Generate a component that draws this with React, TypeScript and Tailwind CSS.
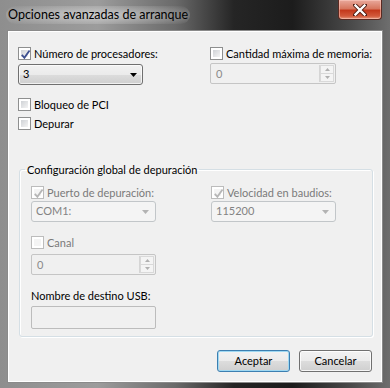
import React from "react";

const font = { fontFamily: 'Lato, "Noto Sans", sans-serif' };

function Check({ checked, disabled, label }: { checked?: boolean; disabled?: boolean; label: string }) {
  return (
    <div className="flex items-center h-[13px]">
      <div
        className={`w-[13px] h-[13px] border ${disabled ? "border-[#bcbcbc]" : "border-[#8e8f8f]"} bg-white p-[2px] shrink-0`}
      >
        <div
          className={`w-full h-full ${disabled ? "bg-[#f4f4f4]" : "bg-gradient-to-br from-[#cfd2d6] to-[#f4f4f4]"} relative`}
        >
          {checked && (
            <svg viewBox="0 0 9 9" className="absolute -left-[1px] -top-[1px] w-[11px] h-[11px]">
              <path
                d="M1.5 4.8 L3.6 7.2 L7.8 1.2"
                fill="none"
                stroke={disabled ? "#b6b6b6" : "#3d4f8f"}
                strokeWidth="1.5"
              />
            </svg>
          )}
        </div>
      </div>
      <span className={`ml-[3px] text-[11px] leading-[15px] whitespace-nowrap ${disabled ? "text-[#7a7a7a]" : "text-black"}`}>
        {label}
      </span>
    </div>
  );
}

function Arrow({ color }: { color: string }) {
  return (
    <svg width="7" height="4" viewBox="0 0 7 4">
      <path d="M0 0 H7 L3.5 4 Z" fill={color} />
    </svg>
  );
}

function Combo({ value, disabled, w }: { value: string; disabled?: boolean; w: string }) {
  if (disabled) {
    return (
      <div className={`${w} h-[21px] rounded-[3px] border border-[#c2c6c9] bg-[#f4f4f4] flex items-center justify-between pl-[4px] pr-[6px]`}>
        <span className="text-[11px] text-[#838383]">{value}</span>
        <Arrow color="#b3b3b3" />
      </div>
    );
  }
  return (
    <div className={`${w} h-[21px] rounded-[3px] border border-[#707070] bg-[linear-gradient(#f2f2f2_0%,#ebebeb_50%,#dddddd_50%,#cfcfcf_100%)] shadow-[inset_0_0_0_1px_rgba(255,255,255,0.7)] flex items-center justify-between pl-[4px] pr-[5px]`}>
      <span className="text-[11px] text-black">{value}</span>
      <Arrow color="#000" />
    </div>
  );
}

function Spin({ value, w }: { value: string; w: string }) {
  return (
    <div className={`${w} h-[21px] border border-[#c5c5c5] rounded-[2px] bg-[#f0f0f0] flex items-stretch`}>
      <span className="flex-1 pl-[5px] text-[11px] leading-[19px] text-[#8a8a8a]">{value}</span>
      <div className="w-[15px] flex flex-col border-l border-[#d5d5d5] my-[1px] mr-[1px]">
        <div className="flex-1 flex items-center justify-center border border-[#d9d9d9] bg-[#f4f4f4]">
          <svg width="5" height="3" viewBox="0 0 5 3"><path d="M0 3 L2.5 0 L5 3 Z" fill="#b0b0b0" /></svg>
        </div>
        <div className="flex-1 flex items-center justify-center border border-[#d9d9d9] border-t-0 bg-[#f4f4f4]">
          <svg width="5" height="3" viewBox="0 0 5 3"><path d="M0 0 L2.5 3 L5 0 Z" fill="#b0b0b0" /></svg>
        </div>
      </div>
    </div>
  );
}

function Button({ label, primary }: { label: string; primary?: boolean }) {
  return (
    <button
      className={`w-[73px] h-[22px] rounded-[3px] border ${primary ? "border-[#3c7fb1] shadow-[inset_0_0_0_1px_#9fd8f2]" : "border-[#707070] shadow-[inset_0_0_0_1px_rgba(255,255,255,0.8)]"} bg-[linear-gradient(#f2f2f2_0%,#ebebeb_50%,#dddddd_50%,#cfcfcf_100%)] text-[11px] text-black`}
    >
      {label}
    </button>
  );
}

export default function App() {
  return (
    <div
      style={font}
      className="w-[390px] h-[388px] flex flex-col bg-[linear-gradient(to_right,#8e8e8e_0%,#9c9c9c_25%,#6a6a6a_45%,#252525_60%,#1c1c1c_75%,#4a4a4a_90%,#6e6e6e_100%)] overflow-hidden"
    >
      {/* Title bar */}
      <div className="h-[30px] flex items-start justify-between pl-[6px] pr-[8px]">
        <span className="mt-[6px] text-[12.5px] leading-[18px] text-black px-[2px] rounded-full bg-[radial-gradient(ellipse_at_center,rgba(235,235,235,0.6),rgba(200,200,200,0))]">
          Opciones avanzadas de arranque
        </span>
        <div className="w-[44px] h-[20px] rounded-b-[4px] border border-t-0 border-[#5a2a22] bg-[linear-gradient(#e9a99c_0%,#d7775f_45%,#c4391c_55%,#d35a3c_85%,#e59a7e_100%)] shadow-[inset_0_0_0_1px_rgba(255,210,200,0.5)] flex items-center justify-center">
          <svg width="14" height="12" viewBox="0 0 14 12">
            <path d="M2 1 L12 11 M12 1 L2 11" stroke="#4a1a10" strokeWidth="4" strokeLinecap="round" />
            <path d="M2.5 1.5 L11.5 10.5 M11.5 1.5 L2.5 10.5" stroke="#fff" strokeWidth="2.4" strokeLinecap="square" />
          </svg>
        </div>
      </div>

      {/* Client area */}
      <div className="mx-[7px] h-[353px] bg-[#f0f0f0] border border-[#8a8a8a] shadow-[inset_0_0_0_1px_#fff] flex flex-col">
        {/* Top options */}
        <div className="grid grid-cols-[192px_1fr] pl-[10px] pt-[16px]">
          <div className="flex flex-col">
            <Check checked label="Número de procesadores:" />
            <div className="mt-[4px]">
              <Combo value="3" w="w-[125px]" />
            </div>
            <div className="mt-[13px]">
              <Check label="Bloqueo de PCI" />
            </div>
            <div className="mt-[6px]">
              <Check label="Depurar" />
            </div>
          </div>
          <div className="flex flex-col">
            <Check label="Cantidad máxima de memoria:" />
            <div className="mt-[3px]">
              <Spin value="0" w="w-[126px]" />
            </div>
          </div>
        </div>

        {/* Group box */}
        <fieldset className="mt-[32px] ml-[11px] mr-[9px] border border-[#d5dfe5] rounded-[3px] shadow-[1px_1px_0_#fff,inset_1px_1px_0_#fff] pl-[11px] pb-[7px]">
          <legend className="ml-[-6px] px-[2px] text-[11px] leading-[15px] text-black">
            Configuración global de depuración
          </legend>
          <div className="grid grid-cols-[180px_1fr] pt-[9px]">
            <div className="flex flex-col">
              <Check checked disabled label="Puerto de depuración:" />
              <div className="mt-[2px]">
                <Combo value="COM1:" disabled w="w-[125px]" />
              </div>
              <div className="mt-[14px]">
                <Check disabled label="Canal" />
              </div>
              <div className="mt-[5px]">
                <Spin value="0" w="w-[125px]" />
              </div>
              <span className="mt-[13px] text-[11px] leading-[15px] text-black">Nombre de destino USB:</span>
              <div className="mt-[3px] w-[125px] h-[23px] border border-[#bcbcbc] rounded-[2px] bg-[#f0f0f0]" />
            </div>
            <div className="flex flex-col">
              <Check checked disabled label="Velocidad en baudios:" />
              <div className="mt-[2px]">
                <Combo value="115200" disabled w="w-[125px]" />
              </div>
            </div>
          </div>
        </fieldset>

        {/* Buttons */}
        <div className="mt-[13px] flex justify-end gap-[9px] pr-[10px]">
          <Button primary label="Aceptar" />
          <Button label="Cancelar" />
        </div>
      </div>
    </div>
  );
}
